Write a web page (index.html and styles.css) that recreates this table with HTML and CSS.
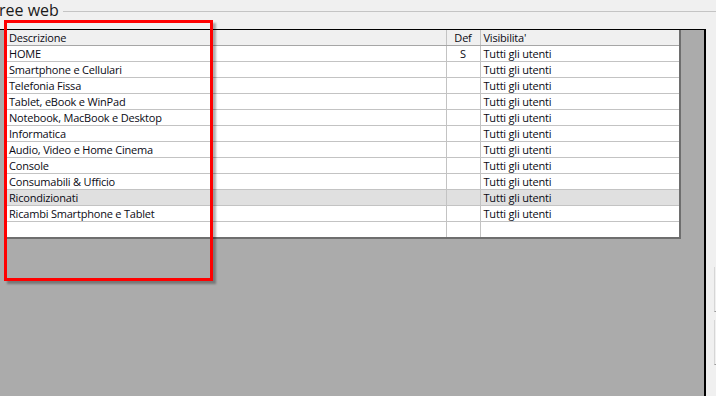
FILE: index.html
```html
<!DOCTYPE html>
<html>
<head>
    <title>Albero web</title>
    <link rel="stylesheet" href="styles.css">
</head>
<body>
    <div class="group-title">
        <span class="group-label">ree web</span>
        <span class="group-line"></span>
    </div>

    <div class="workspace">
        <div class="panel">
            <table class="grid">
                <colgroup>
                    <col class="col-desc">
                    <col class="col-def">
                    <col class="col-vis">
                </colgroup>
                <thead>
                    <tr>
                        <th class="desc">Descrizione</th>
                        <th class="def">Def</th>
                        <th class="vis">Visibilita'</th>
                    </tr>
                </thead>
                <tbody>
                    <tr><td>HOME</td><td class="def">S</td><td>Tutti gli utenti</td></tr>
                    <tr><td>Smartphone e Cellulari</td><td class="def"></td><td>Tutti gli utenti</td></tr>
                    <tr><td>Telefonia Fissa</td><td class="def"></td><td>Tutti gli utenti</td></tr>
                    <tr><td>Tablet, eBook e WinPad</td><td class="def"></td><td>Tutti gli utenti</td></tr>
                    <tr><td>Notebook, MacBook e Desktop</td><td class="def"></td><td>Tutti gli utenti</td></tr>
                    <tr><td>Informatica</td><td class="def"></td><td>Tutti gli utenti</td></tr>
                    <tr><td>Audio, Video e Home Cinema</td><td class="def"></td><td>Tutti gli utenti</td></tr>
                    <tr><td>Console</td><td class="def"></td><td>Tutti gli utenti</td></tr>
                    <tr><td>Consumabili &amp; Ufficio</td><td class="def"></td><td>Tutti gli utenti</td></tr>
                    <tr class="selected"><td>Ricondizionati</td><td class="def"></td><td>Tutti gli utenti</td></tr>
                    <tr><td>Ricambi Smartphone e Tablet</td><td class="def"></td><td>Tutti gli utenti</td></tr>
                    <tr class="empty"><td></td><td class="def"></td><td></td></tr>
                </tbody>
            </table>
        </div>
        <div class="side">
            <span class="side-edge"></span>
            <span class="side-edge"></span>
        </div>
    </div>

    <!-- evidenziazione della colonna descrizione -->
    <div class="highlight"></div>
</body>
</html>
```

FILE: styles.css
```css
:root {
    --form-bg: #f0f0f0;
    --panel-bg: #ababab;
    --grid-line: #c3c3c3;
    --text: #0a0a14;
}

body {
    margin: 0;
    padding: 0;
    width: 716px;
    height: 396px;
    overflow: hidden;
    background: var(--form-bg);
    font-family: "Open Sans", "Liberation Sans", sans-serif;
    font-size: 11px;
    letter-spacing: -0.2px;
    color: var(--text);
    position: relative;
}

/* group box caption */
.group-title {
    display: flex;
    align-items: flex-start;
    height: 29px;
}

.group-label {
    font-size: 16px;
    line-height: 21px;
    letter-spacing: 0;
    margin-left: -1px;
    color: #1a1a1a;
}

.group-line {
    flex: 1;
    height: 1px;
    background: #c4c4c4;
    margin-top: 11px;
    margin-left: 4px;
}

/* grey area holding the grid */
.workspace {
    display: flex;
    height: 367px;
}

.panel {
    width: 706px;
    box-sizing: border-box;
    background: var(--panel-bg);
    border-top: 1px solid #000;
    border-right: 2px solid #000;
    padding-left: 4px;
}

.side {
    flex: 1;
    display: flex;
    flex-direction: column;
    align-items: flex-end;
    padding-top: 238px;
    gap: 8px;
}

.side-edge {
    width: 1px;
    height: 44px;
    border-left: 1px solid #d6d6d6;
    border-bottom: 1px solid #9a9a9a;
}

/* data grid */
.grid {
    border-collapse: collapse;
    table-layout: fixed;
    width: 676px;
    background: #fff;
    border-right: 2px solid #6e6e6e;
    border-bottom: 2px solid #6e6e6e;
}

.col-desc { width: 442px; }
.col-def { width: 34px; }
.col-vis { width: 200px; }

.grid th,
.grid td {
    height: 15px;
    padding: 0 0 0 5px;
    line-height: 15px;
    border-bottom: 1px solid var(--grid-line);
    border-right: 1px solid var(--grid-line);
    white-space: nowrap;
    overflow: hidden;
    text-align: left;
    font-weight: normal;
}

.grid th {
    background: var(--form-bg);
    border-bottom-color: #a6a6a6;
}

.grid th.vis,
.grid td:last-child {
    padding-left: 3px;
}

.grid .def {
    text-align: center;
    padding-left: 0;
}

.grid tr.selected td {
    background: #e0e0e0;
}

.grid tr.empty td {
    border-bottom: none;
}

/* red annotation box */
.highlight {
    position: absolute;
    left: 4px;
    top: 20px;
    width: 203px;
    height: 255px;
    border: 3px solid #ff0000;
    box-shadow: 3px 3px 2px rgba(0, 0, 0, 0.3);
}
```
